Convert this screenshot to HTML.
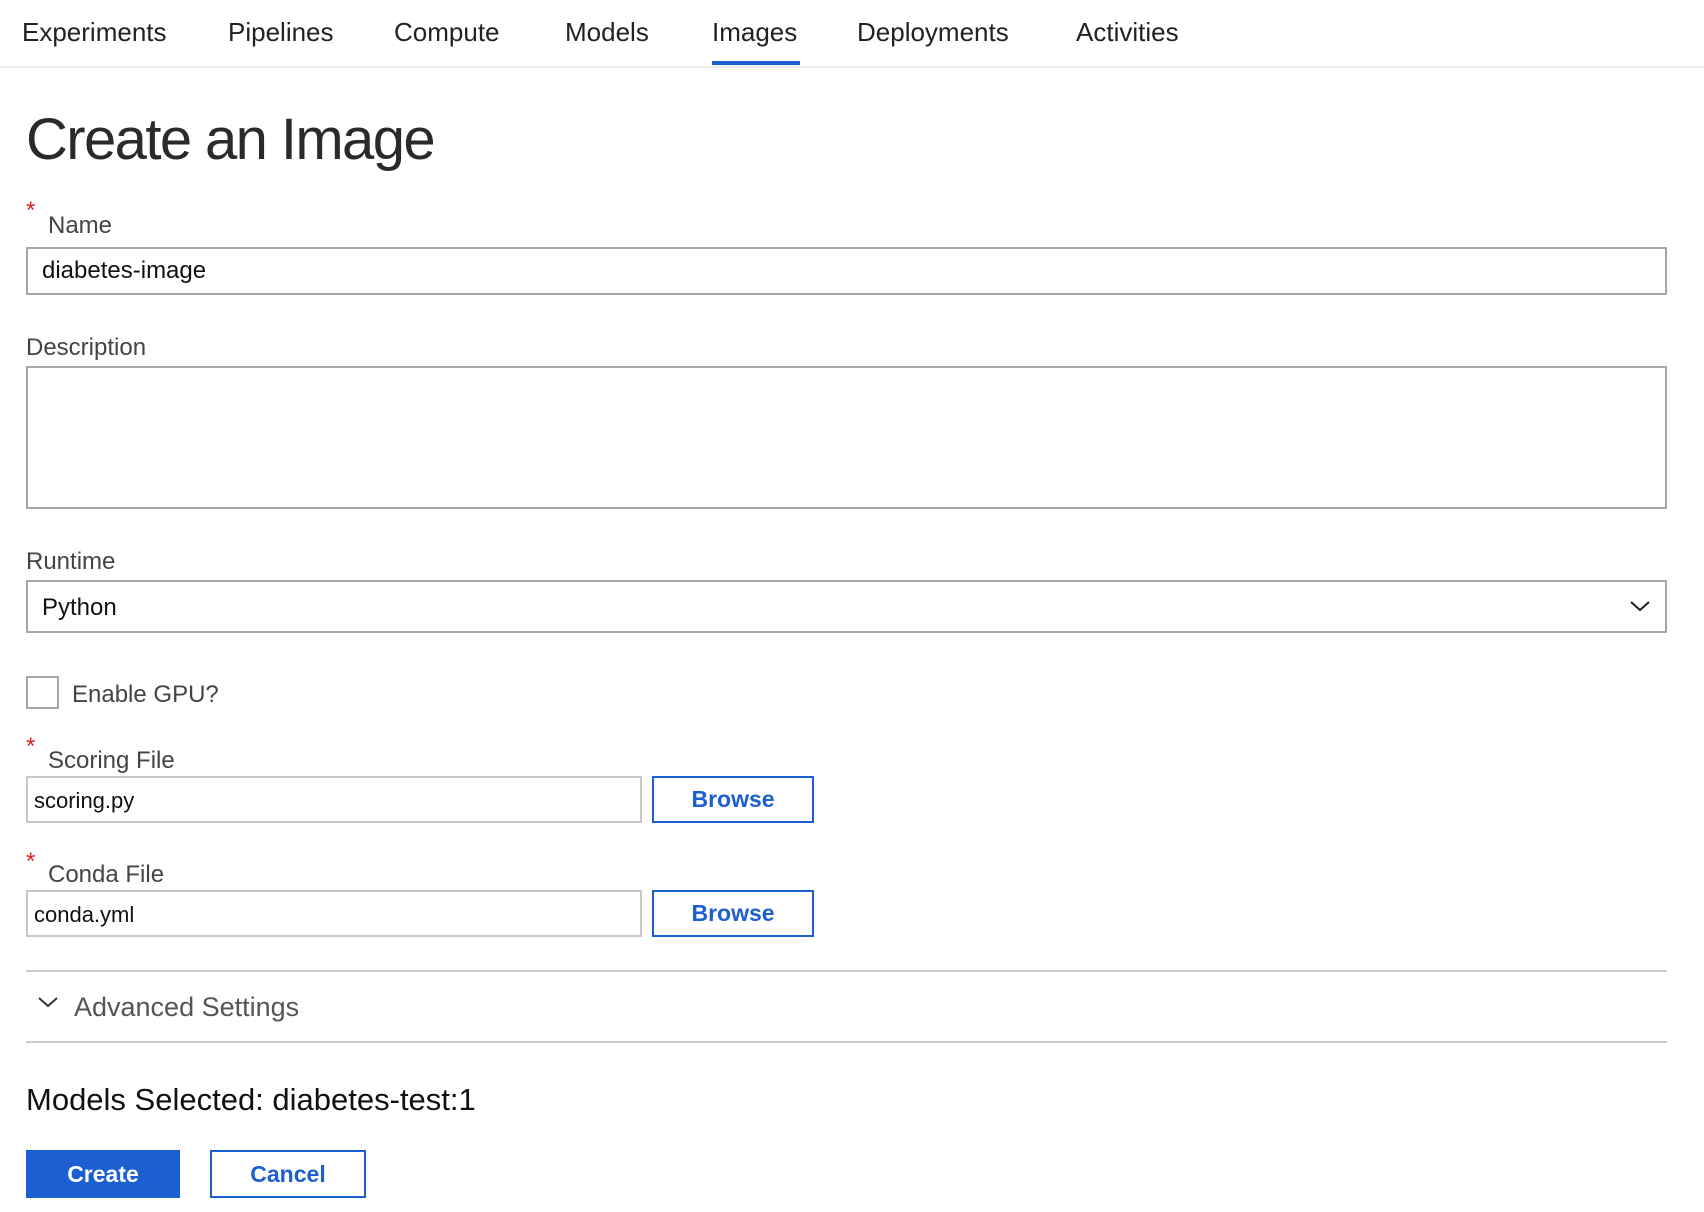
<!DOCTYPE html>
<html><head><meta charset="utf-8"><style>
*{margin:0;padding:0;box-sizing:border-box}
body{width:1704px;height:1212px;background:#fff;font-family:"Liberation Sans",Arial,sans-serif;color:#1f1f1f;position:relative;overflow:hidden}
.a{position:absolute;white-space:nowrap}
.nav{font-size:26px;color:#222;top:17px}
.lbl{font-size:24px;color:#444}
.star{color:#e02020;font-size:24px}
.box{position:absolute;background:#fff}
.val{font-size:24px;color:#111}
.btn{position:absolute;border:2px solid #1b5fd1;color:#1b5fd1;font-weight:bold;font-size:23px;display:flex;align-items:center;justify-content:center;background:#fff}
</style></head><body>
<div class="a nav" style="left:22px">Experiments</div>
<div class="a nav" style="left:228px">Pipelines</div>
<div class="a nav" style="left:394px">Compute</div>
<div class="a nav" style="left:565px">Models</div>
<div class="a nav" style="left:712px">Images</div>
<div class="a nav" style="left:857px">Deployments</div>
<div class="a nav" style="left:1076px">Activities</div>
<div class="a" style="left:712px;top:61px;width:88px;height:4px;background:#1b5fd1"></div>
<div class="a" style="left:0;top:66px;width:1704px;height:2px;background:#ebebeb"></div>

<div class="a" style="left:26px;top:106px;font-size:58px;letter-spacing:-1.6px;color:#2a2a2a">Create an Image</div>

<div class="a star" style="left:26px;top:197px">*</div>
<div class="a lbl" style="left:48px;top:212px">Name</div>
<div class="box" style="left:26px;top:247px;width:1641px;height:48px;border:2px solid #a6a6a6"></div>
<div class="a val" style="left:42px;top:257px">diabetes-image</div>

<div class="a lbl" style="left:26px;top:334px">Description</div>
<div class="box" style="left:26px;top:366px;width:1641px;height:143px;border:2px solid #a6a6a6"></div>

<div class="a lbl" style="left:26px;top:548px">Runtime</div>
<div class="box" style="left:26px;top:580px;width:1641px;height:53px;border:2px solid #a6a6a6"></div>
<div class="a val" style="left:42px;top:594px">Python</div>
<svg class="a" style="left:1628px;top:598px" width="24" height="16" viewBox="0 0 24 16"><path d="M3 4 L12 12 L21 4" fill="none" stroke="#222" stroke-width="2"/></svg>

<div class="box" style="left:26px;top:676px;width:33px;height:33px;border:2px solid #a6a6a6"></div>
<div class="a lbl" style="left:72px;top:681px;font-size:24px">Enable GPU?</div>

<div class="a star" style="left:26px;top:733px">*</div>
<div class="a lbl" style="left:48px;top:747px">Scoring File</div>
<div class="box" style="left:26px;top:776px;width:616px;height:47px;border:2px solid #c8c8c8"></div>
<div class="a" style="left:34px;top:788px;font-size:22px;color:#111">scoring.py</div>
<div class="btn" style="left:652px;top:776px;width:162px;height:47px">Browse</div>

<div class="a star" style="left:26px;top:848px">*</div>
<div class="a lbl" style="left:48px;top:861px">Conda File</div>
<div class="box" style="left:26px;top:890px;width:616px;height:47px;border:2px solid #c8c8c8"></div>
<div class="a" style="left:34px;top:902px;font-size:22px;color:#111">conda.yml</div>
<div class="btn" style="left:652px;top:890px;width:162px;height:47px">Browse</div>

<div class="a" style="left:26px;top:970px;width:1641px;height:2px;background:#c8cacd"></div>
<svg class="a" style="left:36px;top:995px" width="24" height="16" viewBox="0 0 24 16"><path d="M3 3 L12 11 L21 3" fill="none" stroke="#333" stroke-width="2"/></svg>
<div class="a lbl" style="left:74px;top:992px;font-size:27px;color:#555">Advanced Settings</div>
<div class="a" style="left:26px;top:1041px;width:1641px;height:2px;background:#c8cacd"></div>

<div class="a" style="left:26px;top:1082px;font-size:31px;color:#111">Models Selected: diabetes-test:1</div>

<div class="btn" style="left:26px;top:1150px;width:154px;height:48px;background:#1b5fd1;color:#fff;border-color:#1b5fd1">Create</div>
<div class="btn" style="left:210px;top:1150px;width:156px;height:48px">Cancel</div>
</body></html>
